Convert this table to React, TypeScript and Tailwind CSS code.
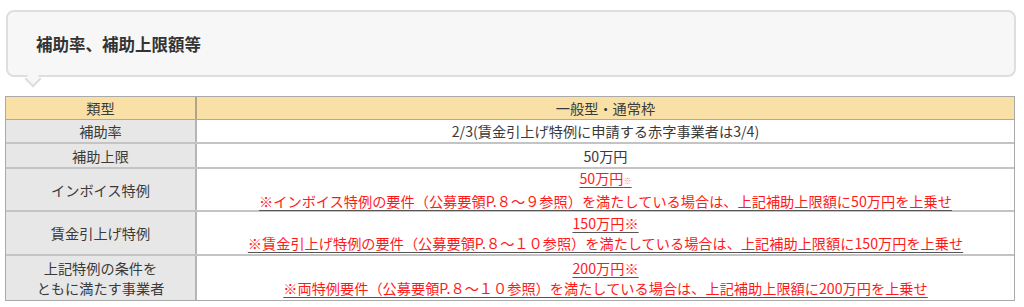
import React from 'react'

type RowType = {
  label: React.ReactNode
  height: string
  value: React.ReactNode
}

const RedLine = ({ children }: { children: React.ReactNode }) => (
  <span className="text-[#ff1a1a] underline decoration-[#555] underline-offset-[3px]">
    {children}
  </span>
)

const rows: RowType[] = [
  {
    label: '補助率',
    height: 'h-[24px]',
    value: '2/3(賃金引上げ特例に申請する赤字事業者は3/4)',
  },
  {
    label: '補助上限',
    height: 'h-[25px]',
    value: '50万円',
  },
  {
    label: 'インボイス特例',
    height: 'h-[43px]',
    value: (
      <>
        <div>
          <RedLine>
            50万円<span className="text-[8px] text-[#ff8080]">※</span>
          </RedLine>
        </div>
        <div>
          <RedLine>※インボイス特例の要件（公募要領P.８～９参照）を満たしている場合は、上記補助上限額に50万円を上乗せ</RedLine>
        </div>
      </>
    ),
  },
  {
    label: '賃金引上げ特例',
    height: 'h-[44px]',
    value: (
      <>
        <div>
          <RedLine>150万円※</RedLine>
        </div>
        <div>
          <RedLine>※賃金引上げ特例の要件（公募要領P.８～１０参照）を満たしている場合は、上記補助上限額に150万円を上乗せ</RedLine>
        </div>
      </>
    ),
  },
  {
    label: (
      <>
        <div>上記特例の条件を</div>
        <div>ともに満たす事業者</div>
      </>
    ),
    height: 'h-[44px]',
    value: (
      <>
        <div>
          <RedLine>200万円※</RedLine>
        </div>
        <div>
          <RedLine>※両特例要件（公募要領P.８～１０参照）を満たしている場合は、上記補助上限額に200万円を上乗せ</RedLine>
        </div>
      </>
    ),
  },
]

const App = () => {
  return (
    <div
      className="w-[1024px] h-[307px] bg-white text-[#3a3a3a] overflow-hidden"
      style={{ fontFamily: '"Noto Sans CJK JP", "Noto Sans", sans-serif' }}
    >
      {/* TITLE BOX */}
      <div className="pt-[10px] pl-[6px]">
        <div className="relative w-[1010px] h-[67px] bg-[#f7f7f7] border-2 border-[#dedede] rounded-[8px] flex items-center pl-[28px]">
          <span className="text-[16.5px] font-bold text-[#333] leading-none pt-[2px]">
            補助率、補助上限額等
          </span>
          <div className="absolute left-[19px] -bottom-[10px] w-[12px] h-[12px] bg-[#f7f7f7] border-r-2 border-b-2 border-[#dedede] rotate-45" />
        </div>
      </div>

      {/* TABLE */}
      <div className="mt-[19px] ml-[5px] w-[1010px] border border-[#aaa] text-[14.2px] leading-[20px]">
        <div className="flex h-[23px] bg-[#f8e0a6] border-b border-[#aaa]">
          <div className="w-[191px] flex items-center justify-center border-r-2 border-[#b0a58a]">
            類型
          </div>
          <div className="flex-1 flex items-center justify-center">
            一般型・通常枠
          </div>
        </div>

        {rows.map((row, rowIndex) => (
          <div
            key={rowIndex}
            className={`flex ${row.height} ${rowIndex < rows.length - 1 ? 'border-b-2 border-[#c4c4c4]' : ''}`}
          >
            <div className="w-[191px] bg-[#e8e7e7] flex flex-col items-center justify-center text-center border-r-2 border-[#b5b5b5]">
              {row.label}
            </div>
            <div className="flex-1 bg-white flex flex-col items-center justify-center text-center">
              {row.value}
            </div>
          </div>
        ))}
      </div>
    </div>
  )
}

export default App
